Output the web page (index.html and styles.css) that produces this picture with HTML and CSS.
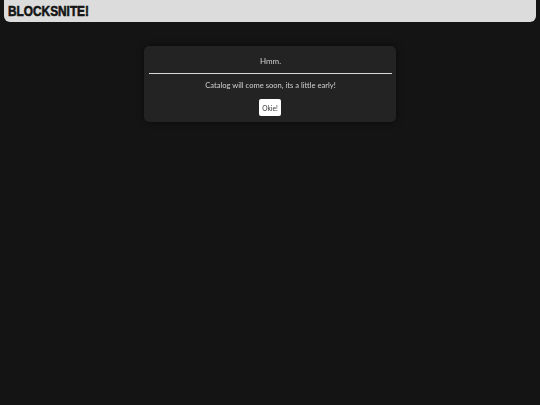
FILE: index.html
```html
<!DOCTYPE html>
<html lang="en">

<head>
  <meta charset="UTF-8">
  <meta name="viewport" content="width=device-width, initial-scale=1.0">
  <title>Blocksnite</title>
  <link rel="stylesheet" href="styles.css">
</head>

<body>
  <!-- top bar -->
  <header class="topbar">
    <h1 class="logo">BLOCKSNITE!</h1>
  </header>

  <!-- notice -->
  <main class="content">
    <div class="dialog">
      <div class="dialog-title">Hmm.</div>
      <div class="dialog-body">Catalog will come soon, its a little early!</div>
      <button class="dialog-button">Okie!</button>
    </div>
  </main>
</body>

</html>
```

FILE: styles.css
```css
* {
  box-sizing: border-box;
}

html,
body {
  height: 100%;
}

body {
  margin: 0;
  padding: 0 4px;
  background-color: #141414;
  color: #cfcfcf;
  font-family: "Lato", "Open Sans", sans-serif;
  overflow: hidden;
}

.topbar {
  height: 22px;
  padding: 0 0 2px 4px;
  display: flex;
  align-items: center;
  background-color: #dcdcdc;
  border-radius: 0 0 6px 6px;
}

.logo {
  margin: 0;
  font-family: "Liberation Sans", sans-serif;
  font-size: 15px;
  font-weight: 700;
  color: #141414;
  -webkit-text-stroke: .6px #141414;
  transform: scaleX(.79);
  transform-origin: left center;
}

.content {
  padding-top: 24px;
  display: flex;
  justify-content: center;
}

.dialog {
  width: 252px;
  height: 76px;
  padding: 0 4px 0 5px;
  display: flex;
  flex-direction: column;
  align-items: center;
  background-color: #232323;
  border-radius: 5px;
  box-shadow: 0 0 6px rgba(0, 0, 0, .5);
  will-change: transform;
}

.dialog-title {
  width: 100%;
  height: 28px;
  padding-top: 3px;
  display: flex;
  align-items: center;
  justify-content: center;
  font-size: 8px;
  border-bottom: 1px solid #d8d8d8;
}

.dialog-body {
  margin-top: 5px;
  font-size: 7.6px;
  line-height: 12px;
}

.dialog-button {
  width: 22px;
  height: 17px;
  margin-top: 8px;
  margin-left: -1px;
  padding: 0;
  font-family: inherit;
  font-size: 6.6px;
  color: #333;
  background-color: #fff;
  border: 0;
  border-radius: 2px;
}
```
